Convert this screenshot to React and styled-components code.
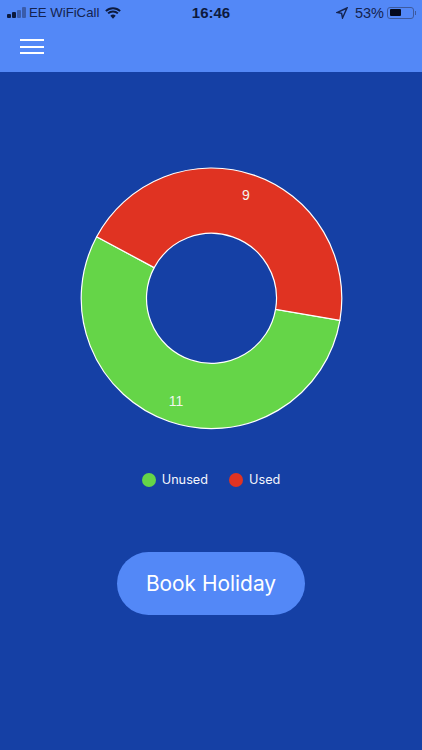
import React from 'react';
import styled, { createGlobalStyle } from 'styled-components';

const Global = createGlobalStyle`
  html, body, #root {
    margin: 0;
    height: 100%;
  }
  body {
    background: #1540a5;
    font-family: Inter, "Liberation Sans", sans-serif;
    overflow: hidden;
  }
`;

const Page = styled.div`
  width: 422px;
  height: 750px;
  display: flex;
  flex-direction: column;
  align-items: center;
  background: #1540a5;
`;

const Header = styled.header`
  width: 100%;
  height: 72px;
  flex-shrink: 0;
  background: #5388f7;
`;

const StatusBar = styled.div`
  height: 25px;
  padding: 0 7px;
  display: grid;
  grid-template-columns: 1fr auto 1fr;
  align-items: center;
  font-family: "Liberation Sans", sans-serif;
  font-size: 14.5px;
  color: #14234f;
`;

const StatusSide = styled.div`
  display: flex;
  align-items: center;
  justify-content: ${(p) => (p.$end ? 'flex-end' : 'flex-start')};
`;

const Carrier = styled.span`
  font-size: 13.2px;
`;

const Clock = styled.span`
  font-size: 15px;
  font-weight: 700;
  color: #0d1a3e;
`;

const Signal = styled.div`
  display: flex;
  align-items: flex-end;
  gap: 1.5px;
  height: 11px;
  width: 22px;
`;

const SignalBar = styled.span`
  width: 3.5px;
  height: ${(p) => p.$h}px;
  border-radius: 1px;
  background: ${(p) => (p.$on ? '#0d1a3e' : '#3a5cab')};
`;

const WifiIcon = styled.svg`
  margin-left: 6px;
`;

const ArrowIcon = styled.svg`
  margin-right: 7px;
`;

const Battery = styled.div`
  width: 27px;
  height: 12px;
  margin: 0 1px 0 3px;
  padding: 1.5px;
  box-sizing: border-box;
  border: 1px solid #3d5a9e;
  border-radius: 3px;
  position: relative;

  &::after {
    content: '';
    position: absolute;
    right: -3px;
    top: 3px;
    width: 1.5px;
    height: 4px;
    background: #3d5a9e;
  }
`;

const BatteryFill = styled.div`
  height: 100%;
  border-radius: 1px;
  background: #050a1c;
`;

const MenuButton = styled.button`
  display: flex;
  flex-direction: column;
  gap: 4.5px;
  width: 24px;
  margin: 14px 0 0 20px;
  padding: 0;
  border: 0;
  background: none;
`;

const MenuLine = styled.span`
  display: block;
  height: 2px;
  background: #fff;
`;

const Chart = styled.svg`
  display: block;
  margin-top: 91px;
  flex-shrink: 0;
`;

const ChartLabel = styled.text`
  fill: #f2f5ee;
  font-family: "Liberation Sans", sans-serif;
  font-size: 14px;
  text-anchor: middle;
`;

const Legend = styled.div`
  display: flex;
  align-items: center;
  gap: 21px;
  margin-top: 39px;
  font-size: 12.7px;
  color: #f4f6fc;
`;

const LegendItem = styled.div`
  display: flex;
  align-items: center;
  gap: 6px;
`;

const Dot = styled.span`
  width: 14px;
  height: 14px;
  border-radius: 50%;
  background: ${(p) => p.$color};
`;

const BookButton = styled.button`
  width: 188px;
  height: 63px;
  margin-top: 65px;
  border: 0;
  border-radius: 32px;
  background: #5388f7;
  color: #fff;
  font-family: Inter, "Liberation Sans", sans-serif;
  font-size: 20.9px;
  font-weight: 400;
`;

const GREEN = '#65d548';
const RED = '#e03322';
const cx = 135.5;
const cy = 135.3;
const outer = 130.3;
const inner = 65;

// ends of the red slice, in degrees clockwise from 3 o'clock
const splitA = (Math.atan2(-61.3, -114.4) * 180) / Math.PI;
const splitB = (Math.atan2(22, 128.3) * 180) / Math.PI;

const point = (r, deg) => {
  const a = (deg * Math.PI) / 180;
  return `${(cx + r * Math.cos(a)).toFixed(2)} ${(cy + r * Math.sin(a)).toFixed(2)}`;
};

const slice = (from, to) => {
  const large = (to - from + 360) % 360 > 180 ? 1 : 0;
  return [
    `M ${point(outer, from)}`,
    `A ${outer} ${outer} 0 ${large} 1 ${point(outer, to)}`,
    `L ${point(inner, to)}`,
    `A ${inner} ${inner} 0 ${large} 0 ${point(inner, from)}`,
    'Z',
  ].join(' ');
};

function Donut() {
  return (
    <Chart width="270" height="270" viewBox="0 0 270 270">
      <path d={slice(splitB, splitA)} fill={GREEN} stroke="#fff" strokeWidth="1.2" />
      <path d={slice(splitA, splitB)} fill={RED} stroke="#fff" strokeWidth="1.2" />
      <ChartLabel x="170" y="37">9</ChartLabel>
      <ChartLabel x="100" y="242.5">11</ChartLabel>
    </Chart>
  );
}

export default function App() {
  return (
    <Page>
      <Global />
      <Header>
        <StatusBar>
          <StatusSide>
            <Signal>
              <SignalBar $on $h={4} />
              <SignalBar $on $h={6} />
              <SignalBar $h={8.5} />
              <SignalBar $h={11} />
            </Signal>
            <Carrier>EE WiFiCall</Carrier>
            <WifiIcon width="16" height="12" viewBox="0 0 16 12">
              <path d="M8 11.8 5.3 8.8a3.8 3.8 0 0 1 5.4 0z" fill="#0d1a3e" />
              <path d="M.9 4.1a10 10 0 0 1 14.2 0M3.1 6.4a7 7 0 0 1 9.8 0" fill="none" stroke="#0d1a3e" strokeWidth="2" />
            </WifiIcon>
          </StatusSide>
          <Clock>16:46</Clock>
          <StatusSide $end>
            <ArrowIcon width="12" height="12" viewBox="0 0 12 12">
              <path d="M11 1 1 5.5l4.6.9.9 4.6z" fill="none" stroke="#14234f" strokeWidth="1.4" />
            </ArrowIcon>
            53%
            <Battery>
              <BatteryFill style={{ width: '53%' }} />
            </Battery>
          </StatusSide>
        </StatusBar>
        <MenuButton aria-label="Menu">
          <MenuLine />
          <MenuLine />
          <MenuLine />
        </MenuButton>
      </Header>
      <Donut />
      <Legend>
        <LegendItem>
          <Dot $color={GREEN} />
          Unused
        </LegendItem>
        <LegendItem>
          <Dot $color={RED} />
          Used
        </LegendItem>
      </Legend>
      <BookButton>Book Holiday</BookButton>
    </Page>
  );
}
